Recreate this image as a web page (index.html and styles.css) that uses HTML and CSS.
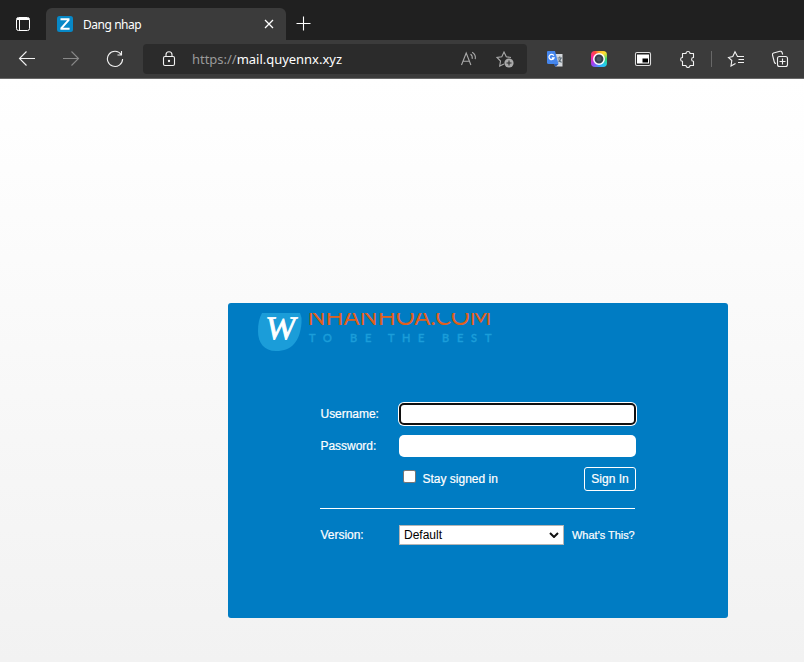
FILE: index.html
```html
<!DOCTYPE html>
<html lang="vi">
<head>
<meta charset="utf-8">
<title>Dang nhap</title>
<link rel="stylesheet" href="styles.css">
</head>
<body>
<header class="tabs">
  <svg class="workspace" viewBox="0 0 16 16" fill="none" stroke="#fff"><rect x="1.5" y="1.5" width="13" height="13" rx="2"/><path d="M2 3h12" stroke-width="2"/><path d="M4.500 4v10"/></svg>
  <div class="tab">
    <svg class="favicon" viewBox="0 0 16 16"><rect width="16" height="16" rx="2.5" fill="#0788c7"/><path d="M3.5 3.3h9M12 3.700 4.200 12.300M3.400 12.7h9.2" fill="none" stroke="#fff" stroke-width="2"/></svg>
    <span class="tab-title">Dang nhap</span>
    <svg class="close" viewBox="0 0 10 10" fill="none" stroke="#fff" stroke-width="1.3"><path d="m1 1 8 8M9 1 1 9"/></svg>
  </div>
  <svg class="plus" viewBox="0 0 15 15" fill="none" stroke="#fff" stroke-width="1.1"><path d="M7.5.5v14M.5 7.5h14"/></svg>
</header>
<nav class="toolbar">
  <div class="group nav-buttons">
    <span class="btn"><svg class="icon" viewBox="0 0 18 18"><path d="M17 8.500H1.5M8.5 1.500l-7 7 7 7"/></svg></span>
    <span class="btn dim"><svg class="icon" viewBox="0 0 18 18"><path d="M1 8.500h15.500M9.500 1.500l7 7-7 7"/></svg></span>
    <span class="btn"><svg class="icon" viewBox="0 0 18 18"><path d="M15.200 4.500A7.600 7.600 0 1 0 16.600 9M15.500 1v4h-4"/></svg></span>
  </div>
  <div class="address">
    <svg class="lock" viewBox="0 0 14 16"><rect x="1.500" y="5.500" width="11" height="9" rx="1.500"/><path d="M4 5.500V3.800a3 3 0 0 1 6 0v1.700"/><circle cx="7" cy="10" r=".6" fill="#fff"/></svg>
    <span class="url"><span class="scheme">https://</span>mail.quyennx.xyz</span>
    <svg class="icon read" viewBox="0 0 18 18"><path d="m1.500 15 4.700-12 4.700 12M3 11.200h6.500M10.500 4.300q2.200 1.300 1.700 4.500M12.200 2.200q4 2.500 3 7"/></svg>
    <svg class="icon favorite" viewBox="0 0 18 18"><path d="M8 14 3.700 16l.8-5L1 7.500l4.800-.8L8 2l2.300 4.700 4.700.8"/><circle cx="13" cy="13" r="4.600" fill="#aaa" stroke="none"/><path d="M13 10.500v5M10.500 13h5" stroke="#2b2b2b"/></svg>
  </div>
  <div class="group extensions">
    <span class="btn"><svg class="icon solid" viewBox="0 0 18 18"><path d="M7 4h9.500v12.500H9z" fill="#d5d8dc"/><path d="M1.500 1H9l3.500 13H2.500Q1 14 1 12.500v-11Z" fill="#4586ed"/><path d="m8 14 4.500 0-3 3z" fill="#285bb5"/><path d="M7.800 5.600A2.600 2.600 0 1 0 8 8H5.800" fill="none" stroke="#fff" stroke-width="1.300"/><path d="M11.500 8h4.500M13.800 6.500V8M15 8q-.8 3-2.500 4M12.500 9.500l3 3" fill="none" stroke="#62717c"/></svg></span>
    <span class="btn"><span class="lens"><svg viewBox="0 0 16 16"><circle cx="8" cy="8" r="5.200" fill="#34404d" stroke="#fff" stroke-width="1.500"/><circle cx="8" cy="8" r="2.400" fill="#4b5763"/></svg></span></span>
    <span class="btn"><svg class="icon" viewBox="0 0 18 18"><rect x="1.500" y="2.500" width="15" height="13" rx="1.500" fill="#222" stroke="#ddd"/><path d="M3 4.500h12v9H3z" fill="#fff" stroke="none"/><path d="M8.500 8.500h5.500V12.500H8.500z" fill="#000" stroke="none"/></svg></span>
    <span class="btn"><svg class="icon" viewBox="0 0 18 18"><path d="M4.500 3.500H8a2 2 0 0 1 4 0h3.500v4a1.900 1.900 0 0 0 0 3.800v4.200H12a2 2 0 0 1-4 0H4.500V11.300a1.900 1.900 0 0 1 0-3.800V3.500z" stroke-linejoin="round"/></svg></span>
    <i class="divider"></i>
    <span class="btn"><svg class="icon" viewBox="0 0 18 18"><path d="m10.500 6.500-2.500-4.700L5.800 6.500 1.500 7.500l3.300 3-.8 5.500 4.500-2.500M10 6.500h7M11.500 9.500H17M11 12.500h6"/></svg></span>
    <span class="btn"><svg class="icon" viewBox="0 0 18 18"><path d="M5 13.500q-1.300 0-1.700-1.500L1.500 5q-.4-1.500 1-2l6.500-1.700q1.500-.4 2 1l.7 2.200"/><rect x="6.500" y="6.500" width="10" height="10" rx="2"/><path d="M11.500 8.500v6M8.500 11.500h6"/></svg></span>
  </div>
</nav>
<main class="page">
  <section class="panel">
    <svg class="logo" viewBox="0 0 240 40">
      <path d="M4 0H42Q44 4 43.500 10C42 28 34 38 18 38C6 38 0 30 0 18Q0 7 4 0Z" fill="#1b9dd9"/>
      <text class="mark" transform="translate(7 26) skewX(-7)" textLength="30" lengthAdjust="spacingAndGlyphs">W</text>
      <text class="brand" x="49.500" y="12" textLength="184" lengthAdjust="spacingAndGlyphs">NHANHOA.COM</text>
      <text class="slogan" y="29" x="51 65 75 92 107 115 130 144 160 170 184 199 213 227">TO BE THE BEST</text>
    </svg>
    <form class="form">
      <label class="label" for="user">Username:</label>
      <input class="field focused" id="user" type="text">
      <label class="label" for="pass">Password:</label>
      <input class="field" id="pass" type="password">
      <div class="actions">
        <label class="stay"><span class="check"></span><span class="stay-text">Stay signed in</span></label>
        <button class="submit" type="button">Sign In</button>
      </div>
      <hr class="rule">
      <span class="label version-label">Version:</span>
      <div class="version">
        <div class="select"><span>Default</span><svg viewBox="0 0 10 6"><path d="m1 1 4 4 4-4" fill="none" stroke="#111" stroke-width="2"/></svg></div>
        <a class="help">What’s This?</a>
      </div>
    </form>
  </section>
</main>
</body>
</html>
```
FILE: styles.css
```css
* { box-sizing: border-box; }
body { margin: 0; height: 662px; overflow: hidden; font-family: "Liberation Sans", Arial, sans-serif; }
svg { display: block; flex: none; }

.tabs { display: flex; height: 40px; padding-top: 8px; background: #202020; }
.workspace { width: 16px; height: 16px; margin: 8px 15px 0; }
.tab { display: flex; align-items: center; width: 240px; height: 32px; padding: 0 12px 0 11px; background: #3b3b3b; border-radius: 6px 6px 0 0; color: #fff; font: 12px "Noto Sans", sans-serif; }
.favicon { width: 16px; height: 16px; }
.tab-title { margin-left: 10px; letter-spacing: -.45px; }
.close { width: 10px; height: 10px; margin-left: auto; }
.plus { width: 15px; height: 15px; margin: 8px 0 0 10px; }

.toolbar { display: flex; align-items: center; height: 39px; padding: 0 2px 1px 5px; background: #3b3b3b; border-bottom: 1px solid #686868; }
.group { display: flex; align-items: center; }
.btn { display: flex; justify-content: center; width: 44px; }
.icon, .lock { width: 18px; height: 18px; fill: none; stroke: #f2f2f2; stroke-width: 1.1; }
.solid { stroke: none; }
.dim .icon { stroke: #888; }
.address { display: flex; align-items: center; width: 384px; height: 30px; margin: 0 6px; padding: 0 13px 0 19px; background: #2b2b2b; border-radius: 4px; }
.lock { width: 14px; height: 16px; }
.url { margin-left: 16px; color: #fff; font: 13px "Noto Sans", sans-serif; white-space: nowrap; letter-spacing: -.02px; }
.scheme { color: #9a9a9a; }
.address .read { margin-left: auto; stroke: #aaa; }
.address .favorite { margin-left: 18px; stroke: #aaa; }
.lens { width: 16px; height: 16px; border-radius: 4px; background: conic-gradient(#ffb52e, #ffe033 12%, #35d56c 25%, #21ccef 38%, #409dff 50%, #a53cf0 65%, #ff2597 80%, #ff493e 92%, #ffb52e); }
.divider { width: 1px; height: 16px; margin: 0 2px; background: #686868; }

.page { display: flex; height: 583px; padding: 224px 0 0 228px; background: linear-gradient(#fff, #f2f2f2); }
.panel { width: 500px; height: 315px; padding: 10px 92px 0 30px; border-radius: 3px; background: #007cc3; color: #fff; font-size: 12px; }
.logo { width: 240px; height: 40px; overflow: hidden; }
.mark { font: 33px "Liberation Serif", serif; fill: #fff; stroke: #fff; stroke-width: .9px; }
.brand { font: 24px Lato, sans-serif; fill: #e0601c; }
.slogan { font: 11px Lato, sans-serif; fill: #1b9dd9; stroke: #1b9dd9; stroke-width: .5px; }
.form { display: grid; grid-template-columns: 78.5px 237px; grid-template-rows: 22px 22px 24px 8px 20px; row-gap: 10px; width: 315.5px; margin: 50px 0 0 62.5px; }
.label { align-self: center; line-height: 22px; white-space: nowrap; -webkit-text-stroke: .2px #fff; letter-spacing: -.03px; }
.field { width: 237px; height: 22px; margin: 0; border: 0; border-radius: 5px; outline: none; background: #fff; }
.focused { border: 2px solid #101010; box-shadow: 0 0 0 1px #fff; }
.actions { grid-column: 2; display: flex; justify-content: space-between; }
.stay { display: flex; -webkit-text-stroke: .2px #fff; }
.check { width: 13px; height: 13px; margin: 3px 6.5px 0 4px; border: 1px solid #767676; border-radius: 2px; background: #fff; }
.stay-text { line-height: 24px; }
.submit { width: 52px; height: 24px; padding: 0; border: 1px solid #fff; border-radius: 3px; background: none; color: #fff; font: 12px "Liberation Sans", Arial, sans-serif; -webkit-text-stroke: .2px #fff; }
.rule { grid-column: 1 / 3; width: 315px; height: 1px; margin: 7px 0 0 -.5px; border: 0; background: #fff; }
.version-label, .version { margin-top: 6px; height: 20px; line-height: 20px; }
.version-label { align-self: start; }
.version { display: flex; align-items: center; }
.select { display: flex; align-items: center; justify-content: space-between; width: 165px; height: 20px; padding: 0 4px; border: 1px solid #b5b5b5; background: #fff; color: #000; }
.select svg { width: 10px; height: 6px; }
.help { margin-left: 8px; font-size: 11px; white-space: nowrap; letter-spacing: -.04px; -webkit-text-stroke: .2px #fff; }
```
